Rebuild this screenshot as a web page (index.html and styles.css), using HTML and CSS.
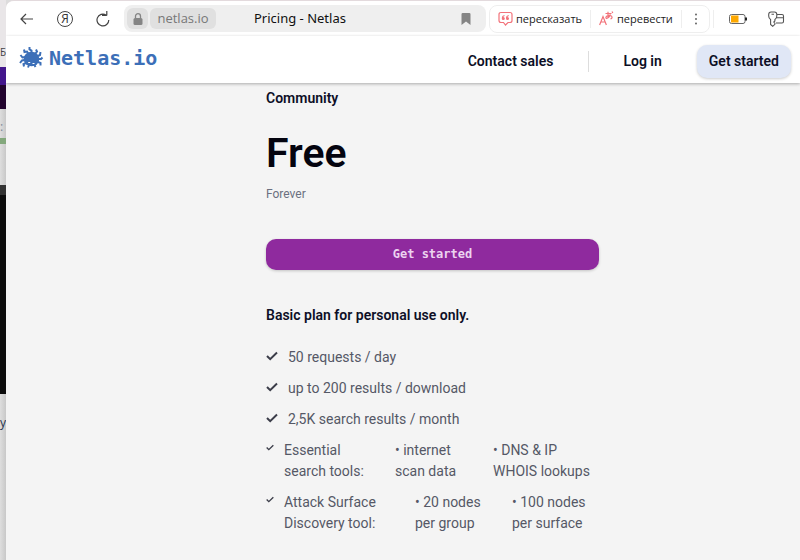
FILE: index.html
```html
<!DOCTYPE html>
<html lang="en">
<head>
    <meta charset="UTF-8">
    <meta name="viewport" content="width=device-width, initial-scale=1.0">
    <title>Pricing - Netlas</title>
    <link rel="stylesheet" href="styles.css">
</head>
<body>
    <!-- edge of the window behind -->
    <div class="behind">
        <div class="b-top">оБ</div>
        <div class="b-violet"></div>
        <div class="b-dark"></div>
        <div class="b-link">:</div>
        <div class="b-green"></div>
        <div class="b-gap"></div>
        <div class="b-grey"></div>
        <div class="b-black"></div>
        <div class="b-end">y</div>
    </div>

    <div class="window">
        <div class="toolbar">
            <button class="tool" aria-label="Back">
                <svg width="14" height="14" viewBox="0 0 14 14"><path d="M13 7H1M6 2L1 7l5 5"/></svg>
            </button>
            <button class="tool ya">Я</button>
            <button class="tool" aria-label="Reload">
                <svg width="14" height="16" viewBox="0 0 14 16"><path d="M12.8 9A5.9 5.9 0 1 1 10 4M6 4.4h4.8M10.8 4.4V0"/></svg>
            </button>
            <div class="address">
                <button class="chip lock" aria-label="Secure connection">
                    <svg width="10" height="12" viewBox="0 0 10 12"><rect x="0.5" y="5" width="9" height="7" rx="1.5" fill="#858585"/><path d="M2.5 5V3.2a2.5 2.5 0 0 1 5 0V5" fill="none" stroke="#858585" stroke-width="1.3"/></svg>
                </button>
                <button class="chip domain">netlas.io</button>
                <span class="page-title">Pricing - Netlas</span>
                <button class="mark" aria-label="Bookmark">
                    <svg width="10" height="12" viewBox="0 0 10 12"><path d="M0.5 1.2Q0.5 0 1.7 0h6.6q1.2 0 1.2 1.2V12L5 8.6 0.5 12z" fill="#858585"/></svg>
                </button>
            </div>
            <div class="actions">
                <button class="action retell">
                    <svg width="15" height="15" viewBox="0 0 15 15" fill="none" stroke="#f2737b" stroke-width="1.2"><path d="M3 1.500h9q2 0 2 2v6q0 2-2 2h-2l-2.500 2.500L5.500 11.500H3q-2 0-2-2v-6q0-2 2-2z"/><path d="M6.500 4.500Q4.300 5 4.300 7.200M10.700 4.500Q8.500 5 8.500 7.200"/><circle cx="5.300" cy="7.600" r="0.900" fill="#f2737b"/><circle cx="9.500" cy="7.600" r="0.900" fill="#f2737b"/></svg>
                    пересказать
                </button>
                <button class="action translate">
                    <svg width="15" height="15" viewBox="0 0 15 15" fill="none" stroke="#f2737b" stroke-width="1.200"><path d="M0.600 14L4 5.500 7.400 14M1.800 11h4.400"/><path d="M6.500 2.500h6M9 0.800v5.500M11.500 3.500Q10 7 7.500 7.500 6 6.500 8 5q2.500-1.300 4.500 0 1.500 2-1 3M13 0.500l0.800 1.500"/></svg>
                    перевести
                </button>
                <button class="action more" aria-label="More">
                    <svg width="4" height="12" viewBox="0 0 4 12" fill="#555"><circle cx="2" cy="1.500" r="0.900"/><circle cx="2" cy="6" r="0.900"/><circle cx="2" cy="10.500" r="0.900"/></svg>
                </button>
            </div>
            <div class="status">
                <svg width="18" height="10" viewBox="0 0 18 10"><rect x="0.500" y="0.500" width="15.500" height="9" rx="2" fill="#fff" stroke="#666"/><path d="M2 1.500h7.500v7H2z" fill="#fda800"/><path d="M17 3.500v3" stroke="#222" stroke-width="2"/></svg>
                <svg width="17" height="16" viewBox="0 0 17 16" fill="none" stroke="#555" stroke-width="1.100"><path d="M2.600 8.500Q0.700 7.500 0.700 5V3.400Q0.700 1 3.100 1h3.300Q8.800 1 8.800 3.400V5q0 2.500-1.900 3.500V10L5.800 11l1.100 1.200v1.100L4.700 15.300 2.600 13.500z"/><path d="M3.500 3.300h2.500"/><path d="M9 3.500h5q1.500 0 1.500 1.500v5.500q0 1.500-1.500 1.500H8M8.600 6.800h6.900"/></svg>
            </div>
        </div>

        <header class="header">
            <a class="logo" href="#">
                <svg width="25" height="24" viewBox="0 0 25 24" fill="none" stroke="#3c6fb8" stroke-width="2"><ellipse cx="12.500" cy="13" rx="7.800" ry="7.300" fill="#3c6fb8" stroke="none"/><path d="M9.500 8L8 5.500 5.500 6 5 3.500M12.500 8V4.500L10.500 3.500V1M16 8l2-2.500L17 3.500M19 10l2-1 0.500-3M19 13h3l1.500-1.500M19 16l2.500 1v2.500M6 11L3.500 11.500 1.500 9M5.500 14L3 14.500 1 17M7 17l-2.500 1L5 20.500M10 19l-1 2.500M15.500 19l1 2"/><path d="M9.200 16.500h2M13.500 17.500h2" stroke="#fff" stroke-width="1.200"/></svg>
                <span>Netlas.io</span>
            </a>
            <nav class="nav">
                <a href="#">Contact sales</a>
                <a class="login" href="#">Log in</a>
                <a class="nav-btn" href="#">Get started</a>
            </nav>
        </header>

        <main class="plan">
            <h2>Community</h2>
            <p class="price">Free</p>
            <p class="period">Forever</p>
            <button class="start">Get started</button>
            <h3>Basic plan for personal use only.</h3>
            <ul class="features">
                <li>
                    <svg class="check" viewBox="0 0 12 10"><path d="M1 5l3.200 3.200L11 1.500"/></svg>
                    <span>50 requests / day</span>
                </li>
                <li>
                    <svg class="check" viewBox="0 0 12 10"><path d="M1 5l3.200 3.200L11 1.500"/></svg>
                    <span>up to 200 results / download</span>
                </li>
                <li>
                    <svg class="check" viewBox="0 0 12 10"><path d="M1 5l3.200 3.200L11 1.500"/></svg>
                    <span>2,5K search results / month</span>
                </li>
                <li class="multi tools">
                    <svg class="check" viewBox="0 0 12 10"><path d="M1 5l3.200 3.200L11 1.500"/></svg>
                    <span>Essential<br>search tools:</span>
                    <span>• internet<br>scan data</span>
                    <span>• DNS &amp; IP<br>WHOIS lookups</span>
                </li>
                <li class="multi surface">
                    <svg class="check" viewBox="0 0 12 10"><path d="M1 5l3.200 3.200L11 1.500"/></svg>
                    <span>Attack Surface<br>Discovery tool:</span>
                    <span>• 20 nodes<br>per group</span>
                    <span>• 100 nodes<br>per surface</span>
                </li>
            </ul>
        </main>
    </div>
</body>
</html>
```

FILE: styles.css
```css
*{
    box-sizing: border-box;
}
body{
    margin: 0;
    display: flex;
    min-height: 100vh;
    background-color: #dcdcdc;
    font-family: Roboto, Arial, sans-serif;
    font-size: 14px;
    line-height: 21px;
    color: #0d0f26;
}
button{
    margin: 0;
    padding: 0;
    border: none;
    background: none;
    font: inherit;
    color: inherit;
    cursor: pointer;
}
a{
    color: inherit;
    text-decoration: none;
}
h2, h3, p, ul{
    margin: 0;
    padding: 0;
}
svg{
    flex: none;
}

/* window behind */
.behind{
    width: 6px;
    flex: none;
    overflow: hidden;
    display: flex;
    flex-direction: column;
    background: linear-gradient(to right, #dedede, #c8c8c8);
    font-family: "Open Sans", sans-serif;
    font-size: 12px;
    white-space: nowrap;
}
.b-top{
    display: flex;
    justify-content: flex-end;
    height: 67px;
    padding-top: 42px;
    background-color: #e9e6e8;
    font-size: 10px;
    color: #444;
}
.b-violet{
    height: 18px;
    background-color: #43168c;
}
.b-dark{
    height: 24px;
    background-color: #22042e;
}
.b-link{
    height: 29px;
    padding-top: 7px;
    color: #7d8799;
}
.b-green{
    height: 6px;
    background-color: #83a87c;
}
.b-gap{
    height: 41px;
}
.b-grey{
    height: 10px;
    background-color: #333;
}
.b-black{
    height: 199px;
    background-color: #0c0c0c;
}
.b-end{
    padding-top: 18px;
    font-size: 12px;
    color: #26334d;
}

.window{
    flex: 1;
    min-width: 0;
    background-color: #f4f4f4;
    border-top: 1px solid #e3dadd;
    border-radius: 8px 0 0 0;
    overflow: hidden;
}

/* browser toolbar */
.toolbar{
    display: flex;
    align-items: center;
    height: 35px;
    padding: 0 15px 0 13px;
    background-color: #fff;
    font-family: "Open Sans", sans-serif;
}
.tool{
    display: flex;
    align-items: center;
    justify-content: center;
    width: 16px;
    height: 16px;
    margin-right: 22px;
}
.tool svg{
    fill: none;
    stroke: #444;
    stroke-width: 1.2;
}
.ya{
    border: 1px solid #444;
    border-radius: 50%;
    font-size: 12px;
    line-height: 14px;
    color: #333;
}
.address{
    flex: 1;
    display: flex;
    align-items: center;
    height: 27px;
    margin-left: -9px;
    padding: 0 15px 0 3px;
    background-color: #efefef;
    border-radius: 8px;
}
.chip{
    display: flex;
    align-items: center;
    justify-content: center;
    height: 21px;
    margin-right: 2px;
    background-color: #e0e0e0;
    border-radius: 6px;
    font-size: 13px;
    color: #777;
}
.lock{
    width: 21px;
}
.domain{
    width: 66px;
}
.page-title{
    flex: 1;
    margin-left: 36px;
    font-family: "Noto Sans", sans-serif;
    font-size: 13px;
    color: #111;
}
.mark{
    display: flex;
}
.actions{
    display: flex;
    align-items: center;
    height: 28px;
    margin-left: 3px;
    border: 1px solid #eee;
    border-radius: 8px;
    font-size: 11px;
    color: #222;
}
.action{
    display: flex;
    align-items: center;
    gap: 3px;
    height: 18px;
}
.retell{
    width: 100px;
    padding-left: 8px;
}
.translate{
    width: 91px;
    padding-left: 8px;
    border-left: 1px solid #eee;
}
.more{
    width: 28px;
    justify-content: center;
    border-left: 1px solid #eee;
}
.status{
    display: flex;
    align-items: center;
    gap: 21px;
    height: 18px;
    margin-left: 3px;
    padding-left: 15px;
    border-left: 1px solid #eee;
}

/* site header */
.header{
    position: relative;
    display: flex;
    align-items: center;
    justify-content: space-between;
    height: 47px;
    padding: 0 9px 0 13px;
    background-color: #fff;
    box-shadow: 0 1px 3px rgba(0, 0, 0, 0.3);
}
.logo{
    display: flex;
    align-items: center;
    gap: 5px;
    padding-bottom: 3px;
    font-family: "DejaVu Sans Mono", monospace;
    font-size: 20px;
    font-weight: bold;
    color: #3c6fb8;
}
.nav{
    display: flex;
    align-items: center;
    padding-top: 3px;
    font-weight: 600;
}
.login{
    margin: 0 35px;
    padding-left: 34px;
    border-left: 1px solid #ddd;
}
.nav-btn{
    padding: 6px 12px;
    background-color: #e0e7f6;
    border-radius: 10px;
    box-shadow: 0 1px 3px rgba(0, 0, 0, 0.2);
}

/* plan */
.plan{
    padding: 5px 201px 24px 260px;
}
h2, h3{
    font-size: 14px;
    font-weight: 600;
    line-height: 21px;
}
.price{
    margin-top: 20px;
    font-size: 41px;
    font-weight: 600;
    line-height: 48px;
    color: #04040f;
}
.period{
    margin-top: 7px;
    font-size: 12px;
    line-height: 20px;
    color: #6b7080;
}
.start{
    display: block;
    width: 100%;
    height: 31px;
    margin: 35px 0;
    background-color: #8f2a9e;
    border-radius: 10px;
    box-shadow: 0 1px 3px rgba(0, 0, 0, 0.2);
    font-family: "DejaVu Sans Mono", monospace;
    font-size: 12px;
    font-weight: bold;
    color: #ecd3f0;
}
.features{
    display: flex;
    flex-direction: column;
    gap: 10px;
    margin-top: 21px;
    list-style: none;
    color: #555866;
}
.features li{
    display: flex;
    gap: 10px;
    white-space: nowrap;
}
.check{
    width: 12px;
    height: 10px;
    margin-top: 4px;
    fill: none;
    stroke: #3b3d49;
    stroke-width: 2;
}
.features .multi{
    display: grid;
    gap: 0;
}
.tools{
    grid-template-columns: 18px 111px 98px 1fr;
}
.surface{
    grid-template-columns: 18px 131px 97px 1fr;
}
.multi .check{
    width: 8px;
    height: 7px;
}
```
